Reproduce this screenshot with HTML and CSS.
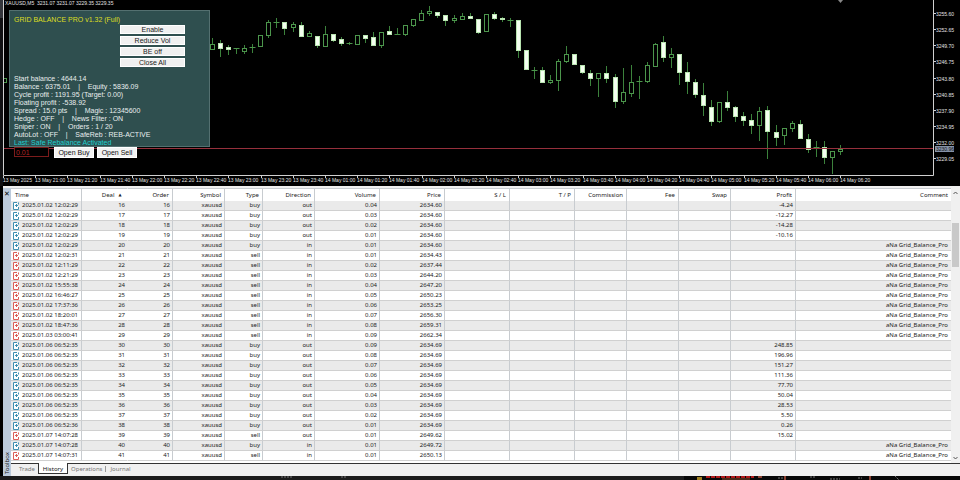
FILE: index.html
```html
<!doctype html>
<html lang="en">
  <head>
    <meta charset="UTF-8" />
    <meta name="viewport" content="width=device-width, initial-scale=1.0" />
    <title>XAUUSD,M5</title>
    <link rel="stylesheet" href="styles.css">
  </head>
  <body>
    <main class="terminal">
      <section class="chart">
        <svg class="chart-canvas" id="chart" viewBox="0 0 960 186" role="img" aria-label="XAUUSD M5 candles"></svg>

        <form class="panel">
          <h1>GRID BALANCE PRO v1.32 (Full)</h1>
          <div class="panel-buttons">
            <button type="button">Enable</button>
            <button type="button">Reduce Vol</button>
            <button type="button">BE off</button>
            <button type="button">Close All</button>
          </div>
          <div class="stats">
            <p>Start balance : 4644.14</p>
            <p>Balance : 6375.01    |    Equity : 5836.09</p>
            <p>Cycle profit : 1191.95 (Target: 0.00)</p>
            <p>Floating profit : -538.92</p>
            <p>Spread : 15.0 pts    |    Magic : 12345600</p>
            <p>Hedge : OFF    |    News Filter : ON</p>
            <p>Sniper : ON    |    Orders : 1 / 20</p>
            <p>AutoLot : OFF    |    SafeReb : REB-ACTIVE</p>
            <p class="status">Last: Safe Rebalance Activated</p>
          </div>
        </form>
        <div class="trade-bar">
          <input type="text" value="0.01" aria-label="Lots" />
          <button type="button">Open Buy</button>
          <button type="button">Open Sell</button>
        </div>
      </section>

      <section class="toolbox">
        <aside class="toolbox-side">
          <button type="button" class="close-btn" aria-label="Close">✕</button>
          <span class="toolbox-title">Toolbox</span>
        </aside>
        <div class="toolbox-body">
          <div class="history">
            <table>
              <colgroup>
                <col class="w-time"><col class="w-deal"><col class="w-order">
                <col class="w-small"><col class="w-type"><col class="w-small">
                <col class="w-wide"><col class="w-wide"><col class="w-wide"><col class="w-wide">
                <col class="w-small"><col class="w-small"><col class="w-small">
                <col class="w-wide"><col>
              </colgroup>
              <thead>
                <tr>
                  <th class="time">Time</th>
                  <th class="deal">Deal <span class="sort">▲</span></th>
                  <th>Order</th>
                  <th>Symbol</th>
                  <th>Type</th>
                  <th>Direction</th>
                  <th>Volume</th>
                  <th>Price</th>
                  <th>S / L</th>
                  <th>T / P</th>
                  <th>Commission</th>
                  <th>Fee</th>
                  <th>Swap</th>
                  <th>Profit</th>
                  <th>Comment</th>
                </tr>
              </thead>
              <tbody id="deals"></tbody>
            </table>
            <div class="scrollbar">
              <svg viewBox="0 0 8 8"><path d="M2 5 4 3 6 5" /></svg>
              <div class="thumb"></div>
              <svg viewBox="0 0 8 8"><path d="M2 3 4 5 6 3" /></svg>
            </div>
          </div>
          <nav class="tabs">
            <a href="#trade">Trade</a>
            <a href="#history" class="active">History</a>
            <a href="#operations">Operations</a>
            <a href="#journal" class="divided">Journal</a>
          </nav>
        </div>
      </section>

      <svg class="desktop" viewBox="0 0 960 4" preserveAspectRatio="none">
        <path d="M684 0h276v4H684z" fill="#070707" />
        <path d="M697 1h5v3h-5z" fill="#a08020" />
        <path d="M706 1h48" stroke="#b01818" stroke-width="2" stroke-dasharray="4 1" />
        <path d="M722 3h28" stroke="#8a5030" />
        <path d="M758 1h4M785 0v4M870 0v4" stroke="#8a4030" stroke-width="2" />
        <path d="M281 1h12M341 1h5M778 2h5M810 1h5M830 3h10M858 2h4M895 0l4 4" stroke="#777" stroke-dasharray="2 1" />
      </svg>
    </main>

    <script src="script.js"></script>
  </body>
</html>
```

FILE: styles.css
```css
* {
  margin: 0;
  padding: 0;
  box-sizing: border-box;
}

body {
  font-family: "Noto Sans", "Open Sans", sans-serif;
  font-size: 6px;
  line-height: 8px;
  background: #000;
  color: #222;
}

button,
input {
  font-family: "Liberation Sans", Arial, sans-serif;
  font-size: 7px;
}

.chart {
  position: relative;
}

.chart-canvas {
  display: block;
  width: 100%;
  background: #000;
}

.chart-canvas text {
  font-family: "Liberation Sans", Arial, sans-serif;
  font-size: 5px;
  fill: #e4e4e4;
  white-space: pre;
}

.axis {
  fill: none;
  stroke: #d0d0d0;
}

.candle {
  fill: #000;
  stroke: #4c964c;
}

.candle.down {
  fill: #f4fff0;
  stroke: #b8e4b0;
}

.wick {
  stroke: #3c823c;
}

/* expert advisor panel, lies over the chart */
.panel {
  position: absolute;
  top: 10px;
  left: 9px;
  width: 201px;
  padding: 5px 4px 0;
  background: #2f4f4f;
  border: 1px solid #547070;
  font-family: "Liberation Sans", Arial, sans-serif;
  font-size: 7px;
  color: #e8eeee;
}

.panel h1 {
  font-size: 7px;
  font-weight: 400;
  line-height: 8px;
  color: #dede22;
}

.panel-buttons {
  display: grid;
  gap: 2px;
  width: 65px;
  margin: 1px 0 0 106px;
}

.panel-buttons button {
  height: 9px;
  line-height: 7px;
  background: #f0f0f0;
  border: 1px solid #fff;
  color: #222;
}

.stats {
  margin-top: 8px;
}

.stats p {
  white-space: pre;
}

.stats .status {
  line-height: 7px;
  color: #20d0d0;
}

.trade-bar {
  position: absolute;
  top: 147px;
  left: 14px;
  display: flex;
  gap: 3px;
}

.trade-bar input {
  width: 35px;
  height: 10px;
  margin-right: 2px;
  padding-left: 1px;
  background: #000;
  border: 1px solid #7c1c1c;
  color: #b42424;
}

.trade-bar button {
  width: 40px;
  height: 11px;
  line-height: 9px;
  background: #f2f2f2;
  border: 1px solid #fff;
  color: #111;
}

.toolbox {
  display: flex;
  margin-left: 3px;
  padding-top: 2px;
  background: #f0f0f0;
}

.toolbox-side {
  display: flex;
  flex-direction: column;
  justify-content: space-between;
  align-items: center;
  width: 8px;
  padding: 2px 0;
  background: #bccbdc;
}

.close-btn {
  border: none;
  background: none;
  font-family: "DejaVu Sans", sans-serif;
  line-height: 8px;
  font-weight: 700;
}

.toolbox-title {
  writing-mode: vertical-rl;
  transform: rotate(180deg);
}

.toolbox-body {
  flex: 1;
}

.history {
  display: flex;
  height: 276px;
  border-bottom: 1px solid #333;
  background: #fff;
}

table {
  flex: 1;
  align-self: flex-start;
  width: 0;
  table-layout: fixed;
  border-collapse: separate;
  border-spacing: 0;
}

.w-time { width: 71px; }
.w-deal { width: 46px; }
.w-order { width: 45px; }
.w-small { width: 52px; }
.w-type { width: 38px; }
.w-wide { width: 65px; }

th,
td {
  padding: 0 2px 0 0;
  font-weight: 400;
  text-align: right;
  white-space: nowrap;
  border-right: 1px solid #c8ccd0;
}

th {
  height: 13px;
  padding-right: 3px;
  border-top: 1px solid #c8ccd0;
}

td {
  height: 10px;
  line-height: 9px;
  border-bottom: 1px solid #d0d0d0;
}

th:last-child,
td:last-child {
  padding-right: 3px;
  border-right: none;
}

th.deal,
td.deal {
  border-right-color: transparent;
}

th.time {
  padding-left: 4px;
  text-align: left;
}

.sort {
  display: inline-block;
  width: 8px;
  font-family: "DejaVu Sans", sans-serif;
  font-size: 4px;
  text-align: center;
  vertical-align: top;
}

tbody tr:nth-child(odd) {
  background: #eaeaea;
}

.stamp {
  display: flex;
  align-items: center;
  gap: 3px;
  padding-left: 2px;
}

.deal-icon {
  width: 6px;
  height: 8px;
  fill: #fff;
  stroke: #3f8fb0;
}

.deal-icon.sell {
  stroke: #dc6058;
}

.scrollbar {
  display: flex;
  flex-direction: column;
  width: 9px;
  padding: 1px 0;
  background: #f0f0f0;
}

.scrollbar svg {
  height: 8px;
  fill: none;
  stroke: #555;
}

.thumb {
  height: 44px;
  margin: 26px 1px auto;
  background: #c9c9c9;
}

.tabs {
  display: flex;
  height: 12px;
  padding-left: 5px;
  line-height: 10px;
}

.tabs a {
  padding: 0 3px;
  color: #777;
  text-decoration: none;
}

.tabs .active {
  height: 11px;
  margin-top: -1px;
  padding: 1px 4px 0;
  background: #fff;
  border: 1px solid #333;
  border-top: none;
  color: #111;
}

.tabs .divided {
  height: 6px;
  margin-top: 2px;
  padding: 0 4px;
  border-left: 1px solid #999;
  line-height: 6px;
}

.desktop {
  display: block;
  width: 100%;
  height: 4px;
  fill: none;
  background: #1c1c1c;
}
```

FILE: script.js
```js
// [high, body top, body bottom, low, down]
const candles = [
  [38, 44, 49, 49, 0], [40, 43, 48, 56, 1], [45, 47, 49, 54, 1], [48, 48, 48, 53, 0],
  [45, 48, 51, 53, 0], [44, 47, 47, 52, 0], [35, 35, 46, 46, 0], [20, 22, 35, 37, 0],
  [18, 22, 22, 27, 0], [22, 22, 28, 34, 1], [22, 24, 27, 31, 0], [22, 25, 36, 36, 1],
  [31, 33, 36, 36, 0], [36, 36, 45, 47, 1], [26, 34, 46, 46, 0], [34, 34, 40, 41, 1],
  [37, 39, 43, 45, 1], [42, 43, 43, 44, 0], [35, 35, 44, 44, 0], [35, 35, 38, 42, 1],
  [32, 37, 45, 45, 1], [32, 32, 45, 47, 0], [26, 31, 34, 34, 1], [28, 34, 34, 34, 0],
  [25, 25, 34, 35, 0], [19, 19, 25, 26, 0], [10, 13, 20, 20, 0], [6, 11, 13, 15, 0],
  [12, 12, 15, 17, 1], [15, 15, 20, 25, 1], [15, 18, 20, 22, 0], [13, 16, 19, 19, 0],
  [13, 16, 18, 18, 1], [19, 19, 32, 33, 1], [14, 14, 31, 31, 0], [12, 14, 18, 19, 1],
  [17, 18, 19, 21, 1], [18, 20, 20, 26, 0], [20, 20, 50, 57, 1], [50, 50, 69, 69, 1],
  [67, 70, 70, 78, 0], [67, 70, 82, 82, 1], [75, 80, 82, 83, 0], [59, 61, 80, 90, 0],
  [46, 54, 61, 62, 0], [54, 54, 64, 64, 1], [65, 65, 72, 73, 1], [70, 73, 78, 85, 1],
  [73, 73, 78, 96, 0], [66, 73, 78, 82, 1], [74, 77, 101, 107, 1], [68, 92, 101, 103, 0],
  [65, 82, 93, 96, 0], [76, 81, 81, 98, 0], [62, 65, 81, 82, 0], [43, 44, 66, 66, 0],
  [36, 42, 57, 61, 1], [48, 54, 57, 67, 0], [54, 54, 72, 84, 1], [62, 72, 81, 93, 1],
  [79, 82, 94, 97, 1], [83, 95, 105, 115, 1], [100, 107, 121, 125, 1], [102, 102, 121, 122, 0],
  [91, 102, 107, 110, 1], [106, 107, 116, 121, 1], [112, 116, 120, 125, 1], [114, 120, 125, 133, 1],
  [107, 111, 125, 140, 0], [106, 110, 131, 158, 1], [125, 132, 137, 145, 1], [128, 128, 135, 144, 0],
  [121, 123, 128, 131, 0], [120, 124, 138, 138, 1], [134, 139, 149, 152, 1], [141, 147, 147, 156, 0],
  [141, 147, 157, 163, 1], [151, 151, 157, 173, 0], [145, 149, 151, 154, 0],
];

const times = [
  "13 May 2025", "13 May 21:00", "13 May 21:20", "13 May 21:40", "13 May 22:00",
  "13 May 22:20", "13 May 22:40", "13 May 23:00", "13 May 23:20", "13 May 23:40",
  "14 May 01:00", "14 May 01:20", "14 May 01:40", "14 May 02:00", "14 May 02:20",
  "14 May 02:40", "14 May 03:00", "14 May 03:20", "14 May 03:40", "14 May 04:00",
  "14 May 04:20", "14 May 04:40", "14 May 05:00", "14 May 05:20", "14 May 05:40",
  "14 May 06:00", "14 May 06:20",
];

const prices = [
  "3255.60", "3252.65", "3249.70", "3246.75", "3243.80",
  "3240.85", "3237.90", "3234.95", "3232.00", "3229.05",
];

function drawChart() {
  let out = '<rect width="3" height="18" fill="#34363c" />';
  out += '<rect class="candle" x="1.5" y="78.5" width="5" height="4" />';
  out += '<rect width="3" height="186" y="18" fill="#101012" />';

  candles.forEach(([high, top, bottom, low, down], i) => {
    const x = Math.round(212 + i * 8.05) + 0.5;
    out += `<path class="wick" d="M${x} ${high}V${low + 1}" />`;
    if (top === bottom) {
      out += `<path class="candle" d="M${x - 3} ${top + 0.5}h6" />`;
    } else {
      out += `<rect class="candle ${down ? "down" : ""}" x="${x - 2}" y="${top + 0.5}" width="4" height="${bottom - top}" />`;
    }
  });

  out += '<path d="M4 148.5H934" stroke="#96303c" />';
  out += '<path class="axis" d="M3.5 0V175.5H933.5V0" />';
  out += '<path d="M838 0h5l-2.500 3z" fill="#888" />';
  out += '<text x="5" y="5">XAUUSD,M5  3231.07 3231.07 3229.35 3229.35</text>';

  times.forEach((label, i) => {
    const x = Math.round(3 + i * 32.2);
    out += `<path class="axis" d="M${x + 0.5} 176v2" />`;
    out += `<text x="${x}" y="182">${label}</text>`;
  });

  prices.forEach((label, i) => {
    const y = Math.round(14 + i * 16.15);
    out += `<path class="axis" d="M934 ${y - 0.5}h2" />`;
    out += `<text x="936" y="${y + 2}">${label}</text>`;
  });

  out += '<rect x="935" y="146" width="19" height="6" fill="#8592a8" />';
  out += '<text x="936" y="151" style="fill: #111">3230.96</text>';
  document.getElementById("chart").innerHTML = out;
}

// time, type, direction, volume, price, profit, comment
const EA = "aNa Grid_Balance_Pro";
const deals = [
  ["2025.01.02 12:02:29", "buy", "out", "0.04", "2634.60", "-4.24", ""],
  ["2025.01.02 12:02:29", "buy", "out", "0.03", "2634.60", "-12.27", ""],
  ["2025.01.02 12:02:29", "buy", "out", "0.02", "2634.60", "-14.28", ""],
  ["2025.01.02 12:02:29", "buy", "out", "0.01", "2634.60", "-10.16", ""],
  ["2025.01.02 12:02:29", "buy", "in", "0.01", "2634.60", "", EA],
  ["2025.01.02 12:02:31", "sell", "in", "0.01", "2634.43", "", EA],
  ["2025.01.02 12:11:29", "sell", "in", "0.02", "2637.44", "", EA],
  ["2025.01.02 12:21:29", "sell", "in", "0.03", "2644.20", "", EA],
  ["2025.01.02 15:55:38", "sell", "in", "0.04", "2647.20", "", EA],
  ["2025.01.02 16:46:27", "sell", "in", "0.05", "2650.23", "", EA],
  ["2025.01.02 17:37:36", "sell", "in", "0.06", "2653.25", "", EA],
  ["2025.01.02 18:20:01", "sell", "in", "0.07", "2656.30", "", EA],
  ["2025.01.02 18:47:36", "sell", "in", "0.08", "2659.31", "", EA],
  ["2025.01.03 03:00:41", "sell", "in", "0.09", "2662.34", "", EA],
  ["2025.01.06 06:52:35", "buy", "out", "0.09", "2634.69", "248.85", ""],
  ["2025.01.06 06:52:35", "buy", "out", "0.08", "2634.69", "196.96", ""],
  ["2025.01.06 06:52:35", "buy", "out", "0.07", "2634.69", "151.27", ""],
  ["2025.01.06 06:52:35", "buy", "out", "0.06", "2634.69", "111.36", ""],
  ["2025.01.06 06:52:35", "buy", "out", "0.05", "2634.69", "77.70", ""],
  ["2025.01.06 06:52:35", "buy", "out", "0.04", "2634.69", "50.04", ""],
  ["2025.01.06 06:52:35", "buy", "out", "0.03", "2634.69", "28.53", ""],
  ["2025.01.06 06:52:35", "buy", "out", "0.02", "2634.69", "5.50", ""],
  ["2025.01.06 06:52:36", "buy", "out", "0.01", "2634.69", "0.26", ""],
  ["2025.01.07 14:07:28", "sell", "out", "0.01", "2649.62", "15.02", ""],
  ["2025.01.07 14:07:28", "buy", "in", "0.01", "2649.72", "", EA],
  ["2025.01.07 14:07:31", "sell", "in", "0.01", "2650.13", "", EA],
];

function fillDeals() {
  document.getElementById("deals").innerHTML = deals
    .map(([time, type, direction, volume, price, profit, comment], i) => {
      const id = 16 + i;
      return `<tr>
        <td><div class="stamp">
          <svg class="deal-icon ${type}" viewBox="0 0 6 8"><path d="M4 .5H.5v7h5V5M2 3.500h3M3.500 2v3M5.500 .5v2" /></svg>
          <span>${time}</span>
        </div></td>
        <td class="deal">${id}</td>
        <td>${id}</td>
        <td>xauusd</td>
        <td>${type}</td>
        <td>${direction}</td>
        <td>${volume}</td>
        <td>${price}</td>
        <td></td><td></td><td></td><td></td><td></td>
        <td>${profit}</td>
        <td>${comment}</td>
      </tr>`;
    })
    .join("");
}

drawChart();
fillDeals();
```
